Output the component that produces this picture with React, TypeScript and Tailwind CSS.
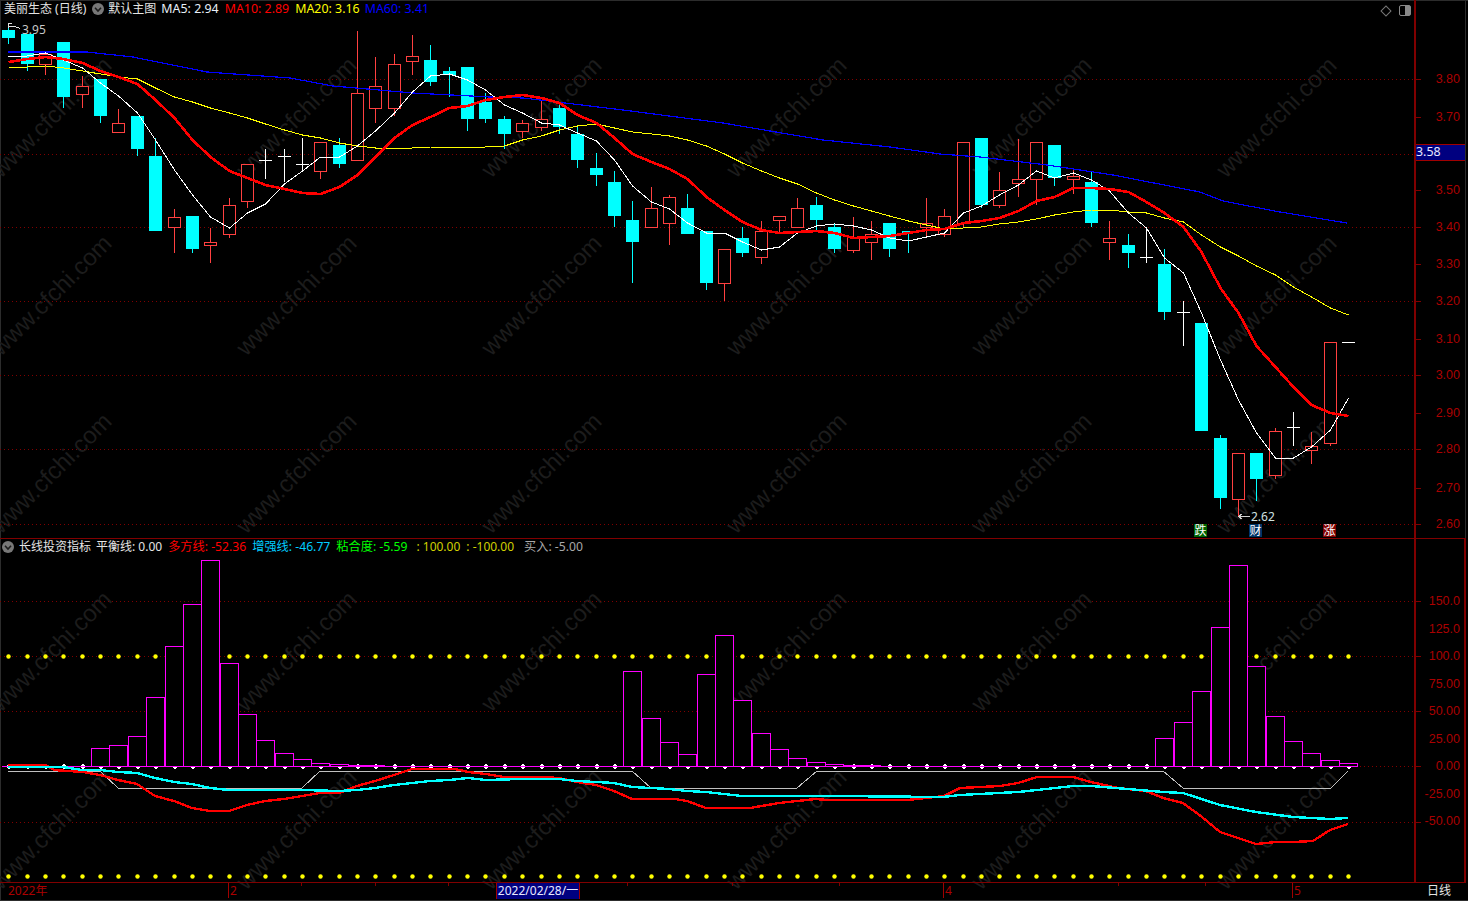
// pixel column of every bar, read from the chart (spacing wobbles between 18 and 19)
const xs = [
  8, 27, 45, 63, 82, 100, 118, 137, 155, 174, 192, 210, 229, 247, 265, 284, 302, 320, 339, 357, 375, 394, 412, 430, 449, 467, 485,
  504, 522, 541, 559, 577, 596, 614, 632, 651, 669, 687, 706, 724, 742, 761, 779, 797, 816, 834, 853, 871, 889, 908, 926, 944, 963, 981,
  999, 1018, 1036, 1054, 1073, 1091, 1109, 1128, 1146, 1164, 1183, 1201, 1220, 1238, 1256, 1275, 1293, 1311, 1330, 1348,
];

type Candle = ["c" | "r" | "w", number, number, number, number];

const candles: Candle[] = [
  ["c", 28, 30, 38, 44], ["c", 34, 34, 64, 71], ["r", 54, 54, 64, 75], ["c", 42, 42, 97, 108],
  ["r", 76, 86, 94, 108], ["c", 79, 79, 116, 123], ["r", 109, 123, 132, 132], ["c", 116, 116, 149, 156],
  ["c", 138, 156, 231, 231], ["r", 209, 217, 227, 253], ["c", 216, 216, 249, 253], ["r", 228, 242, 245, 263],
  ["r", 198, 205, 234, 238], ["r", 164, 164, 201, 208], ["w", 149, 160, 160, 179], ["w", 149, 156, 156, 182],
  ["w", 138, 164, 164, 171], ["r", 142, 142, 171, 179], ["c", 138, 145, 164, 168], ["r", 31, 93, 160, 160],
  ["r", 57, 86, 108, 123], ["r", 54, 64, 108, 116], ["r", 35, 56, 61, 75], ["c", 45, 60, 82, 86],
  ["c", 67, 71, 75, 97], ["c", 67, 67, 119, 131], ["c", 93, 102, 119, 123],
  ["c", 116, 119, 134, 149], ["r", 120, 123, 131, 138], ["r", 100, 119, 127, 131], ["c", 105, 108, 127, 134],
  ["c", 127, 134, 160, 168], ["c", 153, 168, 175, 186], ["c", 171, 182, 216, 227], ["c", 201, 220, 242, 283],
  ["r", 187, 208, 227, 227], ["r", 195, 197, 223, 245], ["c", 194, 208, 234, 234], ["c", 231, 231, 283, 290],
  ["r", 249, 249, 283, 301], ["c", 227, 238, 253, 257], ["r", 221, 231, 257, 264], ["r", 216, 216, 220, 232],
  ["r", 198, 208, 227, 227], ["c", 197, 205, 220, 230], ["c", 223, 227, 249, 253], ["r", 217, 237, 250, 253],
  ["r", 221, 234, 242, 260], ["c", 223, 223, 249, 257], ["c", 231, 231, 233, 253], ["r", 198, 223, 227, 237],
  ["r", 209, 216, 234, 237], ["r", 142, 142, 223, 227], ["c", 138, 138, 205, 208], ["r", 172, 190, 205, 208],
  ["r", 139, 179, 183, 197], ["r", 142, 142, 179, 205], ["c", 145, 145, 178, 186], ["r", 169, 176, 179, 194],
  ["c", 171, 182, 223, 227], ["r", 221, 238, 242, 260], ["c", 234, 245, 253, 268], ["w", 228, 257, 257, 263],
  ["c", 249, 264, 312, 320], ["w", 301, 312, 312, 346], ["c", 323, 323, 431, 431], ["c", 435, 438, 498, 509],
  ["r", 453, 453, 499, 517], ["c", 453, 453, 479, 501], ["r", 428, 431, 475, 479], ["w", 412, 427, 427, 446],
  ["r", 432, 446, 450, 464], ["r", 342, 342, 443, 446], ["w", 342, 342, 342, 342],
];

const ma5 = [
  57, 56, 53, 60, 68, 83, 96, 113, 140, 170, 195, 217, 228, 213, 204, 184, 171, 157, 157, 146, 131, 113, 92, 76, 74, 80, 90,
  105, 113, 123, 125, 133, 141, 160, 186, 202, 209, 223, 233, 233, 242, 250, 247, 233, 226, 224, 226, 230, 238, 241, 237, 233, 213, 206,
  195, 185, 171, 178, 173, 180, 191, 213, 228, 258, 273, 313, 360, 400, 433, 458, 458, 447, 430, 398,
];
const ma10 = [
  62, 59, 57, 59, 63, 71, 77, 84, 100, 118, 140, 157, 171, 178, 185, 189, 193, 194, 187, 175, 157, 138, 125, 117, 108, 106, 100,
  97, 95, 98, 103, 115, 123, 138, 154, 162, 169, 179, 197, 210, 222, 230, 233, 232, 231, 233, 238, 237, 236, 233, 230, 229, 223, 221,
  218, 211, 201, 197, 188, 188, 189, 192, 202, 213, 227, 252, 288, 313, 346, 367, 387, 405, 413, 416,
];
const ma20 = [
  67, 67, 66, 68, 71, 74, 77, 79, 88, 97, 102, 108, 113, 118, 124, 130, 135, 138, 143, 146, 148, 148, 148, 147, 147, 147, 147,
  146, 140, 136, 130, 126, 124, 128, 132, 134, 136, 140, 146, 154, 163, 171, 178, 184, 193, 200, 206, 211, 216, 221, 225, 229, 228, 227,
  224, 222, 219, 215, 212, 210, 210, 212, 213, 218, 222, 235, 247, 256, 266, 275, 287, 297, 308, 315,
];
const ma60 = "8,52 87,52 133,57 207,72 290,78 333,86 413,93 490,97 523,98 557,102 623,110 723,123 823,140 890,147 940,154 980,157 1047,165 1113,175 1200,192 1223,201 1280,212 1347,223";

const barTops: Record<number, number> = {
  5: 748, 6: 745, 7: 736, 8: 697, 9: 646, 10: 604, 11: 560, 12: 663, 13: 714, 14: 740, 15: 753, 16: 759, 17: 763, 18: 764, 19: 765, 20: 765,
  34: 671, 35: 718, 36: 742, 37: 754, 38: 674, 39: 635, 40: 700, 41: 733, 42: 749, 43: 758, 44: 762, 45: 764, 46: 765, 47: 765,
  63: 738, 64: 722, 65: 691, 66: 627, 67: 565, 68: 666, 69: 716, 70: 741, 71: 753, 72: 760, 73: 763,
};

const bullLine = "8,765 46,765 54,770 83,772 100,775 118,780 137,784 155,796 174,801 192,808 210,811 229,811 247,805 265,801 284,799 302,796 320,793 339,793 357,786 375,781 394,775 412,769 455,769 468,772 486,774 504,777 541,777 559,778 577,782 596,785 614,791 632,799 675,799 687,801 706,808 750,808 779,803 797,801 816,799 827,800 907,800 926,798 944,796 960,788 1000,786 1018,783 1037,777 1073,777 1091,782 1118,788 1146,791 1163,798 1183,803 1202,817 1220,832 1238,838 1256,844 1276,842 1293,842 1313,841 1330,830 1348,824";
const boostLine = "8,767 63,767 82,770 100,770 118,772 137,773 155,778 174,782 192,784 210,788 229,790 302,790 339,791 357,790 375,788 394,785 412,783 430,781 449,780 468,778 486,780 521,779 559,779 577,781 596,782 614,783 632,787 651,788 669,789 687,791 706,792 724,794 742,796 834,796 943,797 960,795 1018,792 1037,790 1073,786 1091,786 1128,789 1163,792 1183,793 1220,805 1256,812 1293,817 1330,819 1348,818";
const buyLine = "8,771 100,771 118,788 302,788 320,771 632,771 651,788 797,788 817,771 1163,771 1183,788 1331,788 1348,771";

const priceLabels: [string, number][] = [
  ["3.80", 79], ["3.70", 117], ["3.50", 190], ["3.40", 227], ["3.30", 264], ["3.20", 301],
  ["3.10", 339], ["3.00", 375], ["2.90", 413], ["2.80", 449], ["2.70", 488], ["2.60", 524],
];
const indicatorLabels: [string, number][] = [
  ["150.0", 601], ["125.0", 629], ["100.0", 656], ["75.00", 684], ["50.00", 711],
  ["25.00", 739], ["0.00", 766], ["-25.00", 794], ["-50.00", 821],
];

const toPoints = (ys: number[]) => ys.map((y, i) => `${xs[i] + 0.5},${y}`).join(" ");

function Grid({ ys }: { ys: number[] }) {
  return (
    <>
      {ys.map((y) => (
        <line key={y} x1={0} x2={1414} y1={y + 0.5} y2={y + 0.5} stroke="#800000" strokeDasharray="1 3" />
      ))}
    </>
  );
}

function CandleMark({ c, i }: { c: Candle; i: number }) {
  const [kind, top, open, close, bottom] = c;
  const x = xs[i];
  if (kind === "w") {
    return (
      <g fill="#fff">
        <rect x={x} y={top} width={1} height={bottom - top} />
        <rect x={x - 6} y={open} width={13} height={1} />
      </g>
    );
  }
  if (kind === "c") {
    return (
      <g fill="#00ffff">
        <rect x={x} y={top} width={1} height={bottom - top} />
        <rect x={x - 6} y={open} width={13} height={close - open} />
      </g>
    );
  }
  return (
    <g>
      <rect x={x} y={top} width={1} height={bottom - top} fill="#ff4040" />
      <rect x={x - 5.5} y={open + 0.5} width={12} height={close - open} fill="#000" stroke="#ff4040" />
    </g>
  );
}

function PriceChart() {
  return (
    <svg viewBox="0 0 1414 538" className="block w-[1414px] h-[538px]" shapeRendering="crispEdges">
      <Grid ys={[79, 154, 227, 301, 375, 449, 524]} />
      {candles.map((c, i) => (
        <CandleMark key={i} c={c} i={i} />
      ))}
      <polyline points={ma60} fill="none" stroke="#0000ff" strokeWidth={1.2} />
      <polyline points={toPoints(ma20)} fill="none" stroke="#ffff00" strokeWidth={1} />
      <polyline points={toPoints(ma5)} fill="none" stroke="#ffffff" strokeWidth={1} />
      <polyline points={toPoints(ma10)} fill="none" stroke="#ff0000" strokeWidth={2.6} />

      {/* high and low marks */}
      <path d="M8.5 28V23.5H12M8.5 26H13L20 28.5" fill="none" stroke="#e0e0e0" />
      <text x={22} y={34} fontSize={12} fill="#c8c8c8">3.95</text>
      <path d="M1238.5 516.5H1250M1238.5 516.5L1242 514M1238.5 516.5L1242 519" fill="none" stroke="#d0d0d0" />
      <text x={1251} y={521} fontSize={12} fill="#d0e0e0">2.62</text>

      <rect x={1194} y={524} width={13} height={13} fill="#006400" />
      <text x={1194.5} y={535} fontSize={12} fill="#fff">跌</text>
      <rect x={1249} y={524} width={13} height={13} fill="#003366" />
      <text x={1249.5} y={535} fontSize={12} fill="#fff">财</text>
      <rect x={1323} y={524} width={13} height={13} fill="#800000" />
      <text x={1323.5} y={535} fontSize={12} fill="#fff">涨</text>
    </svg>
  );
}

function IndicatorChart() {
  return (
    <svg viewBox="0 539 1414 343" className="block w-[1414px] h-[343px]" shapeRendering="crispEdges">
      <Grid ys={[601, 656, 711, 766, 822]} />
      {xs.map((x) => (
        <g key={x}>
          <circle cx={x + 0.5} cy={656.5} r={2.2} fill="#ffff00" shapeRendering="auto" />
          <circle cx={x + 0.5} cy={876.5} r={2.2} fill="#ffff00" shapeRendering="auto" />
          <path d={`M${x + 0.5} 763.5L${x + 3.5} 766.5L${x + 0.5} 769.5L${x - 2.5} 766.5Z`} fill="#ffffff" />
        </g>
      ))}
      {xs.map((x, i) =>
        barTops[i] === undefined ? null : (
          <rect key={x} x={x - 8.5} y={barTops[i] + 0.5} width={18} height={766 - barTops[i]} fill="#000" stroke="#ff00ff" />
        ),
      )}
      <line x1={2} x2={1358} y1={766.5} y2={766.5} stroke="#ff00ff" />
      <polyline points={buyLine} fill="none" stroke="#c0c0c0" strokeWidth={1} />
      <polyline points={bullLine} fill="none" stroke="#ff0000" strokeWidth={2.4} />
      <polyline points={boostLine} fill="none" stroke="#00ffff" strokeWidth={2.4} />
    </svg>
  );
}

function ValueAxis({ labels, top, height, ticks }: { labels: [string, number][]; top: number; height: number; ticks: number[] }) {
  return (
    <svg viewBox={`1416 ${top} 49 ${height}`} className="block w-[49px]" style={{ height }}>
      {ticks.map((y) => (
        <rect key={y} x={1416} y={y} width={5} height={1} fill="#800000" />
      ))}
      {labels.map(([t, y]) => (
        <text key={t} x={1460} y={y + 4} fontSize={12.5} fill="#aa0000" textAnchor="end" className="font-['Liberation_Sans',sans-serif]">
          {t}
        </text>
      ))}
    </svg>
  );
}

function CircleChevron() {
  return (
    <svg viewBox="0 0 12 12" className="w-3 h-3 shrink-0">
      <circle cx={6} cy={6} r={6} fill="#787878" />
      <path d="M3 4.8L6 8L9 4.8" fill="none" stroke="#1c1c1c" strokeWidth={1.6} />
    </svg>
  );
}

function Watermark() {
  const columns = [0, 1, 2, 3, 4, 5];
  const rows = [0, 1, 2, 3, 4];
  return (
    <svg viewBox="0 0 1468 901" className="absolute inset-0 w-[1468px] h-[901px] pointer-events-none">
      {columns.flatMap((c) =>
        rows.map((r) => (
          <text
            key={`${c}-${r}`}
            transform={`translate(${245 * c + 1} ${178 * r + 179}) rotate(-45)`}
            fontSize={24}
            fill="#1c1c1c"
            className="font-['Liberation_Sans',sans-serif]"
          >
            www.cfchi.com
          </text>
        )),
      )}
    </svg>
  );
}

export default function App() {
  return (
    <div className="relative w-[1468px] h-[901px] overflow-hidden bg-black text-[12px] leading-[18px] font-['Noto_Sans','Noto_Sans_CJK_SC',sans-serif] shadow-[inset_1px_1px_0_#2c2c2c,inset_0_-1px_0_#2c2c2c]">
      <Watermark />

      <div className="relative flex flex-col w-[1466px]">
        {/* price panel */}
        <div className="flex h-[539px] border-b border-[#800000]">
          <div className="relative w-[1414px]">
            <PriceChart />
            <div className="absolute left-[4px] top-0 flex items-center h-[18px] whitespace-nowrap">
              <span className="text-[#e4e4e4]">美丽生态 (日线)</span>
              <span className="ml-[6px]"><CircleChevron /></span>
              <span className="ml-[4px] text-[#e4e4e4]">默认主图</span>
              <span className="ml-[5px] text-[12.4px] text-[#e8f0f8]">MA5: 2.94</span>
              <span className="ml-[6px] text-[12.4px] text-[#ff0000]">MA10: 2.89</span>
              <span className="ml-[6px] text-[12.4px] text-[#ffff00]">MA20: 3.16</span>
              <span className="ml-[5px] text-[12.4px] text-[#0000ff]">MA60: 3.41</span>
            </div>
            <div className="absolute right-[3px] top-[5px] flex items-center gap-[9px]">
              <span className="w-[8px] h-[8px] rotate-45 border border-[#777]" />
              <span className="flex justify-end w-[12px] h-[11px] rounded-[2px] border border-[#888]">
                <span className="w-[5px] bg-[#888]" />
              </span>
            </div>
          </div>
          <div className="relative w-[52px] border-l-2 border-r border-l-[#800000] border-r-[#2c2c2c]">
            <ValueAxis labels={priceLabels} top={0} height={538} ticks={priceLabels.map(([, y]) => y)} />
            <div className="absolute left-0 top-[144px] w-[49px] h-[17px] border-y border-[#a00000] bg-[#000080] leading-[14px] text-[12.4px] text-[#e8e8ff]">
              3.58
            </div>
          </div>
        </div>

        {/* indicator panel */}
        <div className="flex h-[344px] border-b border-[#800000]">
          <div className="relative w-[1414px]">
            <IndicatorChart />
            <div className="absolute left-[2px] top-[-1px] flex items-center h-[18px] whitespace-nowrap">
              <CircleChevron />
              <span className="ml-[5px] text-[#e4e4e4]">长线投资指标</span>
              <span className="ml-[5px] text-[#e4e4e4]">平衡线: 0.00</span>
              <span className="ml-[6px] text-[12.2px] text-[#ff0000]">多方线: -52.36</span>
              <span className="ml-[6px] text-[12.2px] text-[#00ccff]">增强线: -46.77</span>
              <span className="ml-[6px] text-[12.2px] text-[#00ff00]">粘合度: -5.59</span>
              <span className="ml-[9px] text-[#d0d000]">: 100.00</span>
              <span className="ml-[6px] text-[#d0d000]">: -100.00</span>
              <span className="ml-[10px] text-[12.2px] text-[#a8a8a8]">买入: -5.00</span>
            </div>
          </div>
          <div className="w-[52px] border-x-2 border-[#800000]">
            <ValueAxis labels={indicatorLabels} top={539} height={343} ticks={[601, 656, 711, 766, 822]} />
          </div>
        </div>

        {/* time axis */}
        <div className="flex h-[17px]">
          <div className="relative w-[1414px]">
            <svg viewBox="0 883 1414 17" className="block w-[1414px] h-[17px]" shapeRendering="crispEdges">
              {[301, 375, 448, 627, 732, 839, 1118, 1205].map((x) => (
                <rect key={x} x={x} y={883} width={1} height={3} fill="#800000" />
              ))}
              {[228, 943, 1292].map((x) => (
                <rect key={x} x={x} y={883} width={1} height={15} fill="#a00000" />
              ))}
              <g fontSize={12} fill="#aa0000">
                <text x={8} y={895}>2022年</text>
                <text x={230} y={895}>2</text>
                <text x={945} y={895}>4</text>
                <text x={1294} y={895}>5</text>
              </g>
            </svg>
            <div className="absolute left-[496px] top-0 w-[84px] h-[16px] border-x border-[#a00000] bg-[#000080] text-center leading-[16px] text-[#e8e8ff]">
              2022/02/28/一
            </div>
          </div>
          <div className="w-[50px] text-center leading-[16px] text-[#e4e4e4]">日线</div>
        </div>
      </div>
    </div>
  );
}
